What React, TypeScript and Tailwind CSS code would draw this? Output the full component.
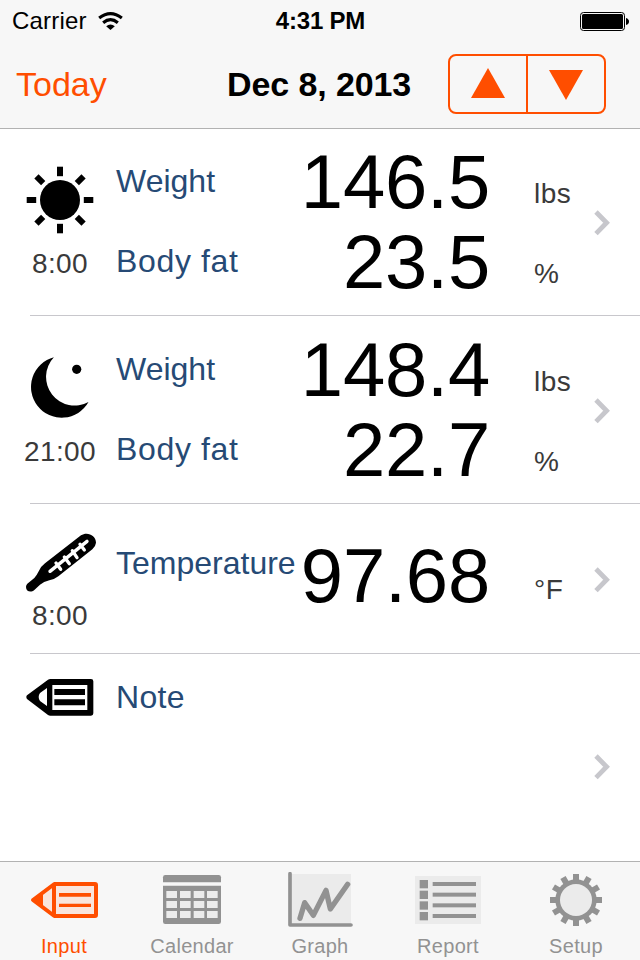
import type { ReactNode } from "react";
import clsx from "clsx";

interface Reading {
  label: string;
  value: string;
  unit:  string;
}

interface EntryRowProps {
  icon:       ReactNode;
  time:       string;
  readings:   Reading[];
  className:  string;
  labelClass: string;
  valueClass: string;
  unitClass:  string;
}

const SunIcon = () => (
  <svg viewBox="-34 -34 68 68" className="h-[68px] w-[68px]">
    <circle r="20" />
    {[0, 45, 90, 135, 180, 225, 270, 315].map((a) => (
      <rect key={a} x="-3" y="-33.3" width="6" height="9.5" transform={`rotate(${a})`} />
    ))}
  </svg>
);

const MoonIcon = () => (
  <svg viewBox="26 353 68 68" className="h-[68px] w-[68px]">
    <path d="M53.9 357.3A30.7 30.7 0 1 0 88.5 402A28.6 28.6 0 0 1 53.9 357.3Z" />
    <circle cx="76.7" cy="369.3" r="4.6" />
  </svg>
);

const ThermometerIcon = () => (
  <svg viewBox="72 66 216 183" className="h-[61px] w-[72px] overflow-visible">
    <path d="M82 221L103 204Q110 196 117 182Q123 169 135 160L243 76C262 64 288 76 288 98Q287 109 277 118L175 199Q164 208 148 211Q131 215 120 224L103 240C93 249 78 245 78 231Q78 225 82 221Z" />
    <path
      d="M150 184L261 94M168 159L182 178M193 141L208 161M217 122L231 143M240 103L253 120"
      fill="none"
      stroke="#fff"
      strokeWidth="10"
      strokeLinecap="round"
    />
  </svg>
);

const NoteIcon = () => (
  <svg viewBox="77 504 207 117" className="h-[39px] w-[69px]">
    <path
      fillRule="evenodd"
      d="M80 556L143 509Q146 507 150 507H272Q279 507 279 514V610Q279 617 272 617H150Q146 617 143 615L80 567Q76 561 80 556ZM156 525V600H261V525ZM140 534L119 549Q111 561 119 573L140 588Z"
    />
    <path d="M162 537H254V555H162ZM162 568H254V586H162Z" />
  </svg>
);

const Chevron = ({ className }: { className?: string }) => (
  <svg viewBox="0 0 18 28" className={clsx("absolute right-[29px] h-7 w-[18px]", className)}>
    <path d="M3 3L13.6 13.8L3 24.6" fill="none" stroke="#c7c7cc" strokeWidth="4.8" />
  </svg>
);

function EntryRow({ icon, time, readings, className, labelClass, valueClass, unitClass }: EntryRowProps) {
  return (
    <>
      <section className={clsx("relative flex", className)}>
        <div className="flex w-[116px] flex-col items-center pl-1">
          {icon}
          <span className="text-[28px] leading-[42px] tracking-[0.4px] text-[#3a3a3a]">{time}</span>
        </div>
        <div className={clsx("w-[180px] text-[32px] leading-[80px] text-[#264a75]", labelClass)}>
          {readings.map((r) => (
            <div key={r.label} className={clsx(r.label === "Body fat" && "tracking-[0.65px]")}>{r.label}</div>
          ))}
        </div>
        <div className={clsx("w-[194px] text-right text-[76px] leading-[80px] tracking-[-0.2px]", valueClass)}>
          {readings.map((r) => <div key={r.label}>{r.value}</div>)}
        </div>
        <div className={clsx("pl-11 text-[28px] leading-[80px] tracking-[0.5px] text-[#3a3a3a]", unitClass)}>
          {readings.map((r) => <div key={r.label}>{r.unit}</div>)}
        </div>
        <Chevron className="top-1/2 -mt-[13px]" />
      </section>
      <hr className="ml-[30px] border-[#c8c7cc]" />
    </>
  );
}

const tabs = [
  {
    label: "Input",
    viewBox: "84 51 216 168",
    icon: (
      <>
        <path d="M161 88H289V183H161L98 135Z" fill="#f9e5dd" />
        <path
          d="M163 87H285Q288 87 288 90V180Q288 183 285 183H163L99 135Z"
          fill="none"
          stroke="currentColor"
          strokeWidth="12"
          strokeLinejoin="round"
        />
        <path d="M129 112V158L98 135ZM156 87H168V183H156ZM177 114H273V125H177ZM177 146H273V156H177Z" />
      </>
    ),
  },
  {
    label: "Calendar",
    viewBox: "468 51 216 168",
    icon: (
      <>
        <path d="M496 60H656Q663 60 663 67V200Q663 207 656 207H496Q489 207 489 200V67Q489 60 496 60Z" />
        <rect x="489" y="81" width="174" height="12" fill="#dedede" />
        <rect x="489" y="84" width="174" height="6" fill="#f7f7f7" />
        {[108, 138, 168].map((y) =>
          [499, 540, 581, 621].map((x) => (
            <rect key={`${x}-${y}`} x={x} y={y} width="32" height="21" fill="#ececec" />
          )),
        )}
      </>
    ),
  },
  {
    label: "Graph",
    viewBox: "132 51 216 168",
    icon: (
      <>
        <rect x="150" y="57" width="183" height="153" fill="#ebebeb" />
        <path d="M150 56V210H333" fill="none" stroke="currentColor" strokeWidth="11" strokeLinecap="round" strokeLinejoin="round" />
        <path d="M180 190L194 143L220 181L258 106L271 162L323 88" fill="none" stroke="currentColor" strokeWidth="16" strokeLinecap="round" strokeLinejoin="round" />
      </>
    ),
  },
  {
    label: "Report",
    viewBox: "516 51 216 168",
    icon: (
      <>
        <rect x="525" y="63" width="198" height="144" fill="#ebebeb" />
        {[75, 107, 139, 171].map((y) => (
          <g key={y}>
            <rect x="539" y={y} width="25" height="25" />
            <rect x="578" y={y + 6} width="130" height="12" />
          </g>
        ))}
      </>
    ),
  },
  {
    label: "Setup",
    viewBox: "180 51 216 168",
    icon: (
      <g transform="translate(288 135)">
        {[0, 30, 60, 90, 120, 150].map((a) => (
          <rect key={a} x="-9" y="-78" width="18" height="156" transform={`rotate(${a})`} />
        ))}
        <circle r="62" />
        <circle r="48" fill="#ebebeb" />
      </g>
    ),
  },
];

export default function App() {
  return (
    <div className="flex h-[960px] w-[640px] flex-col overflow-hidden bg-white font-['Liberation_Sans',Arial,sans-serif] text-black">
      <header className="relative h-32 shrink-0 bg-[#f7f7f7] shadow-[0_1px_0_#b2b2b2]">
        <div className="grid h-10 grid-cols-3 items-center pr-[11px] pl-3 text-2xl leading-[42px]">
          <div className="flex items-center gap-[11px]">
            <span className="tracking-[0.2px]">Carrier</span>
            <svg viewBox="0 0 74 54" className="-mt-px h-[18px] w-[25px]" fill="none" stroke="#000">
              <path d="M3 18Q37 -8 71 18M15 32Q37 14 59 32" strokeWidth="9.5" />
              <path d="M24 43Q37 32 50 43L37 54Z" fill="#000" stroke="none" />
            </svg>
          </div>
          <span className="text-center font-bold tracking-[-0.2px]">4:31 PM</span>
          <svg viewBox="0 0 49 20" className="mt-px h-5 w-[49px] justify-self-end">
            <rect x="0.5" y="0.5" width="44" height="18" rx="3" fill="none" stroke="#000" />
            <rect x="2" y="2" width="41" height="15" rx="1.5" />
            <path d="M46 6Q49 7 49 9.5Q49 12 46 13Z" />
          </svg>
        </div>
        <nav className="flex h-[88px] items-center pr-[34px] pl-4 text-[34px]">
          <button className="w-[211px] text-left text-[#ff4e00]">Today</button>
          <h1 className="font-bold tracking-[-0.1px] whitespace-nowrap">Dec 8, 2013</h1>
          <div className="ml-auto flex h-[60px] w-[158px] divide-x-2 divide-[#ff4e00] rounded-lg border-2 border-[#ff4e00] text-[#ff4e00]">
            <button className="flex w-[78px] items-center justify-center">
              <svg viewBox="0 0 34 30" className="-mt-0.5 h-[30px] w-[34px]" fill="currentColor">
                <path d="M17 0L34 30H0Z" />
              </svg>
            </button>
            <button className="flex flex-1 items-center justify-center">
              <svg viewBox="0 0 34 30" className="mt-0.5 h-[30px] w-[34px]" fill="currentColor">
                <path d="M0 0H34L17 30Z" />
              </svg>
            </button>
          </div>
        </nav>
      </header>

      <main className="h-[733px] shrink-0">
        <EntryRow
          icon={<div className="mt-[38px] mb-[9px]"><SunIcon /></div>}
          time="8:00"
          readings={[
            { label: "Weight", value: "146.5", unit: "lbs" },
            { label: "Body fat", value: "23.5", unit: "%" },
          ]}
          className="h-[187px]"
          labelClass="pt-[13px]"
          valueClass="pt-3.5"
          unitClass="pt-[26px]"
        />
        <EntryRow
          icon={<div className="mt-[37px] mb-[10px]"><MoonIcon /></div>}
          time="21:00"
          readings={[
            { label: "Weight", value: "148.4", unit: "lbs" },
            { label: "Body fat", value: "22.7", unit: "%" },
          ]}
          className="h-[187px]"
          labelClass="pt-[13px]"
          valueClass="pt-3.5"
          unitClass="pt-[26px]"
        />
        <EntryRow
          icon={<div className="mt-7 mb-0.5"><ThermometerIcon /></div>}
          time="8:00"
          readings={[{ label: "Temperature", value: "97.68", unit: "°F" }]}
          className="h-[149px]"
          labelClass="pt-[19px]"
          valueClass="pt-8"
          unitClass="pt-[46px]"
        />
        <section className="relative flex">
          <div className="flex w-[116px] justify-center pt-6 pl-1">
            <NoteIcon />
          </div>
          <div className="pt-[3px] text-[32px] leading-[80px] tracking-[0.3px] text-[#264a75]">Note</div>
          <Chevron className="top-[99px]" />
        </section>
      </main>

      <footer className="grid flex-1 grid-cols-5 border-t border-[#b2b2b2] bg-[#f7f7f7] pt-2.5">
        {tabs.map((tab, i) => (
          <button
            key={tab.label}
            className={clsx("flex flex-col items-center", i === 0 ? "text-[#ff4e00]" : "text-[#929292]")}
          >
            <svg viewBox={tab.viewBox} className="h-14 w-[72px]" fill="currentColor">{tab.icon}</svg>
            <span className="mt-1.5 text-xl leading-6 tracking-[0.3px]">{tab.label}</span>
          </button>
        ))}
      </footer>
    </div>
  );
}
